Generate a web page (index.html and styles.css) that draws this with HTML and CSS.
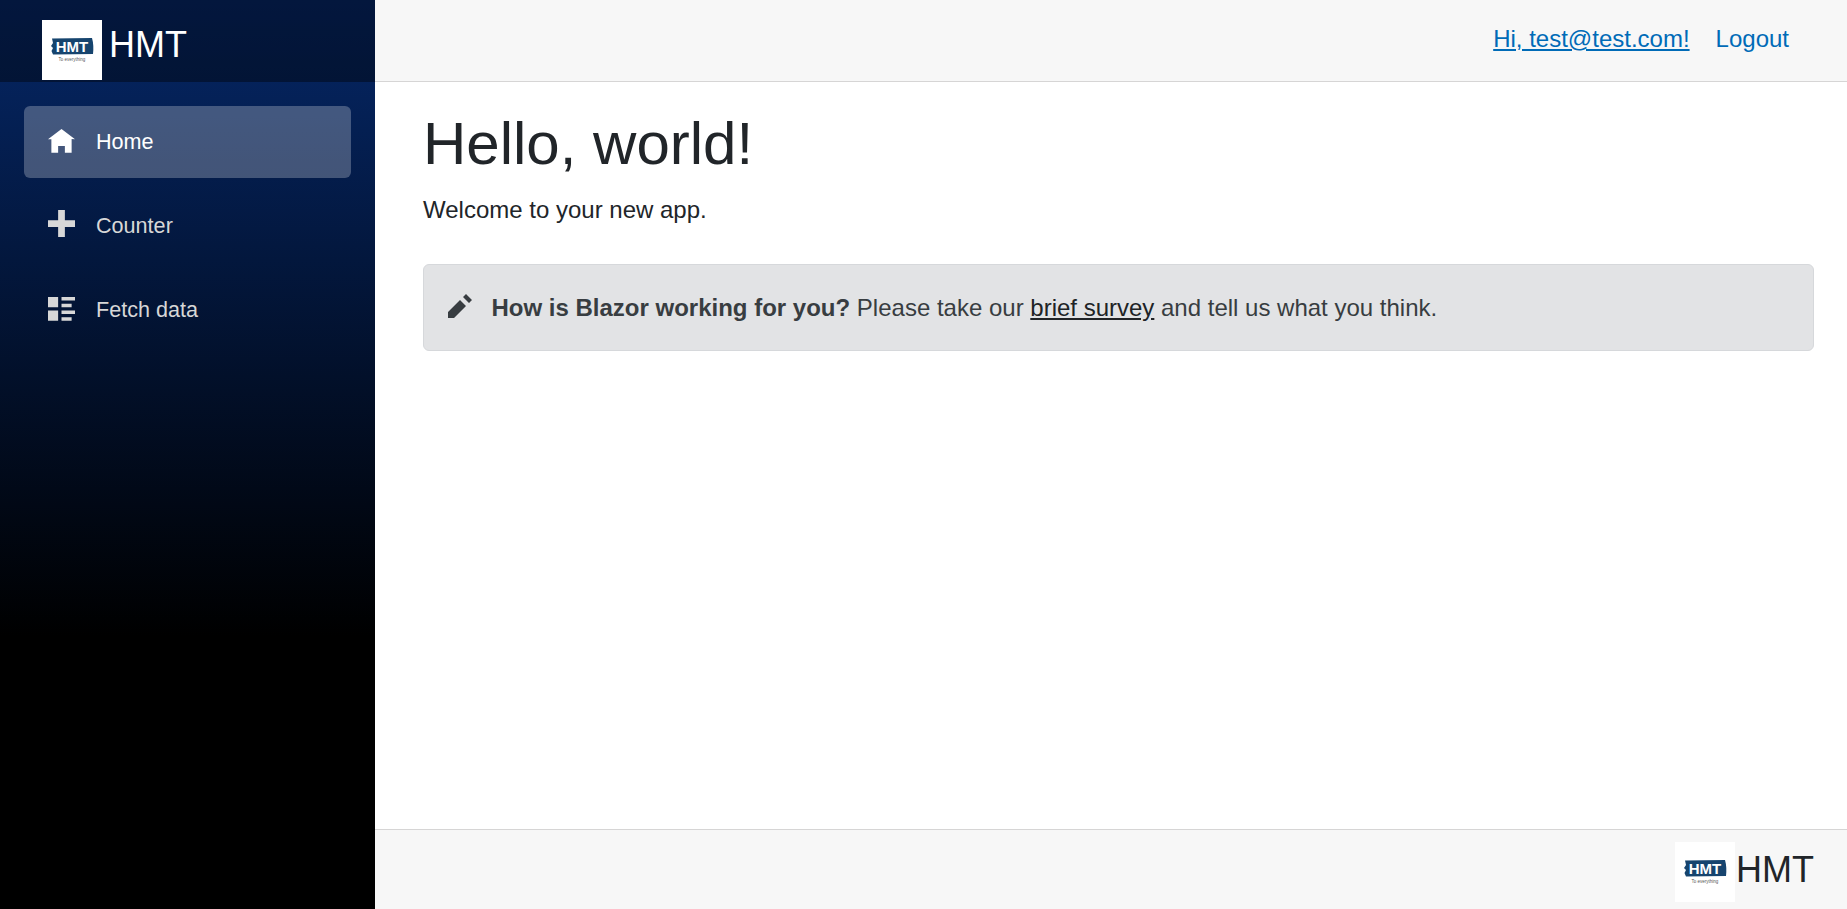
FILE: index.html
```html
<!DOCTYPE html>
<html lang="en">
<head>
<meta charset="utf-8">
<title>HMT</title>
<link rel="stylesheet" href="styles.css">
</head>
<body>
<div class="page">
  <aside class="sidebar">
    <div class="brand-row">
      <svg class="logo" viewBox="0 0 60 60"><rect width="60" height="60" fill="#fff"/><path class="logo-blob" d="M10 18.500 L50 18 Q52 25 51 34 L11 34.500 L9.500 31 L11 28 L9 26 L11 23 Z"/><text class="logo-name" x="30" y="32" text-anchor="middle">HMT</text><text class="logo-tag" x="30" y="41" text-anchor="middle">To everything</text></svg>
      <a class="brand" href="#">HMT</a>
    </div>
    <nav class="nav">
      <a class="nav-link active" href="#"><svg class="nav-icon" viewBox="0 0 8 8"><path d="M4 0l-4 3h1v4h2v-2h2v2h2v-4.030l1 .03-4-3z"/></svg>Home</a>
      <a class="nav-link" href="#"><svg class="nav-icon nav-icon-raised" viewBox="0 0 8 8"><path d="M3 0v3h-3v2h3v3h2v-3h3v-2h-3v-3h-2z"/></svg>Counter</a>
      <a class="nav-link" href="#"><svg class="nav-icon" viewBox="0 0 8 8"><path d="M0 0v3h3v-3h-3zm4 0v1h4v-1h-4zm0 2v1h3v-1h-3zm-4 2v3h3v-3h-3zm4 0v1h4v-1h-4zm0 2v1h3v-1h-3z"/></svg>Fetch data</a>
    </nav>
  </aside>
  <div class="main">
    <header class="top-row">
      <a class="top-link underlined" href="#">Hi, test@test.com!</a>
      <a class="top-link" href="#">Logout</a>
    </header>
    <main class="content">
      <h1 class="title">Hello, world!</h1>
      <p class="lead">Welcome to your new app.</p>
      <div class="alert">
        <svg class="alert-icon" viewBox="0 0 8 8"><path d="M6 0l-1 1 2 2 1-1-2-2zm-2 2l-4 4v2h2l4-4-2-2z"/></svg>
        <span><strong>How is Blazor working for you?</strong> Please take our <a class="alert-link" href="#">brief survey</a> and tell us what you think.</span>
      </div>
    </main>
    <footer class="footer">
      <svg class="logo" viewBox="0 0 60 60"><rect width="60" height="60" fill="#fff"/><path class="logo-blob" d="M10 18.500 L50 18 Q52 25 51 34 L11 34.500 L9.500 31 L11 28 L9 26 L11 23 Z"/><text class="logo-name" x="30" y="32" text-anchor="middle">HMT</text><text class="logo-tag" x="30" y="41" text-anchor="middle">To everything</text></svg>
      <span class="footer-name">HMT</span>
    </footer>
  </div>
</div>
</body>
</html>
```
FILE: styles.css
```css
* { box-sizing: border-box; }
html, body { margin: 0; height: 100%; }
body {
  font-family: "Liberation Sans", Arial, sans-serif;
  font-size: 24px;
  line-height: 1.5;
  color: #212529;
  background: #fff;
}
.page { display: flex; height: 100vh; overflow: hidden; }
.sidebar {
  width: 375px;
  flex: none;
  background-image: linear-gradient(180deg, #052767 0%, #000 70%);
}
.brand-row {
  height: 82px;
  padding: 20px 0 0 42px;
  display: flex;
  align-items: flex-start;
  background: rgba(0, 0, 0, .4);
}
.logo { width: 60px; height: 60px; flex: none; display: block; }
.logo-blob { fill: #16446e; }
.logo-name { font: 700 15px "Liberation Sans", Arial, sans-serif; fill: #fff; }
.logo-tag { font: 4.500px "Liberation Sans", Arial, sans-serif; fill: #555; }
.brand {
  color: #fff;
  font-size: 36px;
  line-height: 44px;
  margin: 3px 0 0 7px;
  text-decoration: none;
}
.nav { display: flex; flex-direction: column; gap: 12px; padding: 24px 24px 0; }
.nav-link {
  display: flex;
  align-items: center;
  height: 72px;
  padding-left: 24px;
  border-radius: 6px;
  color: #d7d7d7;
  font-size: 21.600px;
  text-decoration: none;
}
.nav-link.active { background: rgba(255, 255, 255, .25); color: #fff; }
.nav-icon { width: 27px; height: 27px; margin-right: 21px; fill: currentColor; flex: none; }
.nav-icon-raised { margin-bottom: 5px; }
.main { flex: 1; min-width: 0; display: flex; flex-direction: column; }
.top-row {
  height: 82px;
  flex: none;
  display: flex;
  justify-content: flex-end;
  align-items: center;
  gap: 26px;
  padding: 0 58px 3px 0;
  background: #f7f7f7;
  border-bottom: 1px solid #d6d5d5;
}
.top-link { color: #006bb7; text-decoration: none; }
.top-link.underlined { text-decoration: underline; }
.content { flex: 1; padding: 26px 33px 0 48px; }
.title { margin: 0 0 12px; font-size: 60px; font-weight: 400; line-height: 72px; }
.lead { margin: 0 0 36px; }
.alert {
  display: flex;
  align-items: center;
  height: 87px;
  padding: 0 24px;
  background: #e2e3e5;
  border: 1px solid #d6d8db;
  border-radius: 6px;
  color: #383d41;
}
.alert-icon { width: 24px; height: 24px; margin: 0 19.500px 4px 0; fill: currentColor; flex: none; }
.alert-link { color: #202326; }
.footer {
  height: 80px;
  flex: none;
  display: flex;
  justify-content: flex-end;
  align-items: flex-start;
  padding: 12px 33px 0 0;
  background: #f7f7f7;
  border-top: 1px solid #d6d5d5;
}
.footer-name { font-size: 36px; line-height: 44px; margin: 6px 0 0 1px; }
```
